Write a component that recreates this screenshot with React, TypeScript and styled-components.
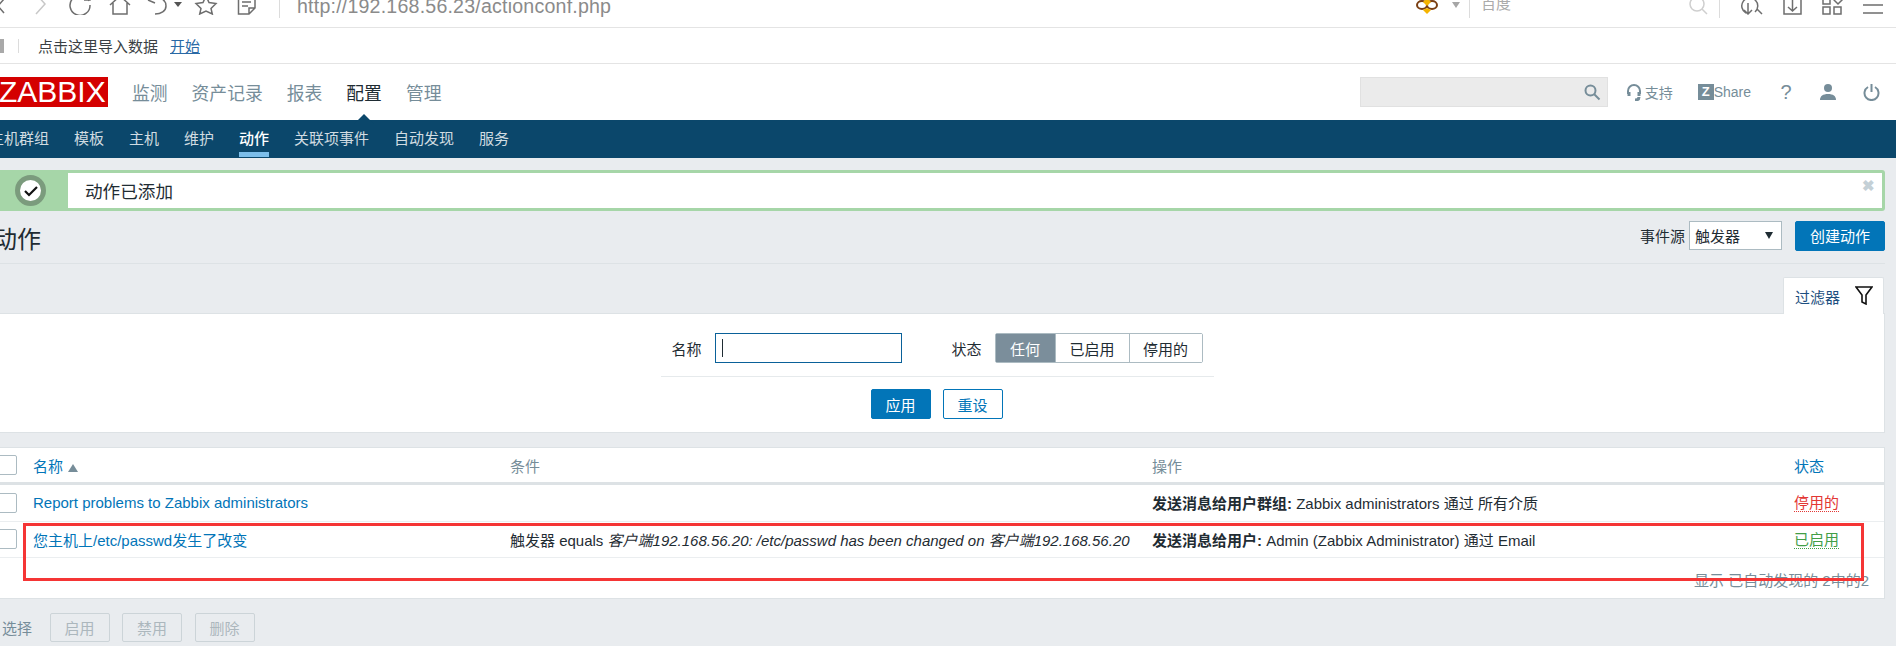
import styled, { createGlobalStyle } from "styled-components";

const GlobalStyle = createGlobalStyle`
  html, body {
    margin: 0;
    padding: 0;
    height: 646px;
    overflow: hidden;
    background: #e9ecef;
  }
  body {
    font-family: "Liberation Sans", "Noto Sans CJK SC", sans-serif;
    font-size: 15px;
    color: #1f2c33;
  }
  * { box-sizing: border-box; }
`;

const Page = styled.div`
  position: relative;
  width: 1896px;
  height: 646px;
  overflow: hidden;
`;

/* browser chrome */
const Toolbar = styled.div`
  height: 28px;
  background: #fff;
  border-bottom: 1px solid #e4e4e4;
  display: flex;
  align-items: flex-end;
  justify-content: space-between;
  padding-bottom: 12px;
  overflow: hidden;
`;

const ToolGroup = styled.div`
  display: flex;
  align-items: flex-end;
  height: 24px;
`;

const ToolIcon = styled.svg<{ $ml?: number; $w?: number; $tone?: string; $solid?: boolean }>`
  flex: none;
  width: ${p => p.$w ?? 24}px;
  height: 24px;
  margin-left: ${p => p.$ml ?? 0}px;
  fill: ${p => (p.$solid ? p.$tone : "none")};
  stroke: ${p => (p.$solid ? "none" : p.$tone ?? "#6e6e6e")};
  stroke-width: 1.5;
`;

const ToolDivider = styled.div<{ $ml: number }>`
  flex: none;
  width: 1px;
  height: 30px;
  margin-left: ${p => p.$ml}px;
  margin-bottom: -3px;
  background: #dcdcdc;
`;

const ToolSpacer = styled.div`
  flex: none;
  width: 11px;
`;

const UrlText = styled.span`
  flex: none;
  margin-left: 17px;
  font-size: 19.6px;
  line-height: 24px;
  margin-bottom: -3px;
  color: #8b8b8b;
  letter-spacing: 0.2px;
`;

const SearchHint = styled.span`
  flex: none;
  width: 32px;
  margin-left: 11px;
  font-size: 15px;
  line-height: 24px;
  margin-bottom: -1px;
  color: #ababab;
`;

const BookmarkBar = styled.div`
  height: 36px;
  background: #fff;
  border-bottom: 1px solid #e4e4e4;
  display: flex;
  align-items: center;
  font-size: 15px;
  color: #3a3f44;
`;

const BookmarkThumb = styled.div`
  width: 4px;
  height: 14px;
  background: #a9a9a9;
`;

const BookmarkDivider = styled.div`
  width: 1px;
  height: 14px;
  margin: 0 19px 0 14px;
  background: #dcdcdc;
`;

const BookmarkLink = styled.a`
  margin-left: 12px;
  color: #2a69a5;
  text-decoration: underline;
`;

/* zabbix header */
const Header = styled.header`
  position: relative;
  height: 56px;
  background: #fff;
  display: flex;
  align-items: center;
`;

const Logo = styled.div`
  flex: none;
  width: 108px;
  height: 30px;
  background: #d40000;
  color: #fff;
  font-size: 30px;
  line-height: 30px;
  text-indent: -1px;
  white-space: nowrap;
  overflow: hidden;
`;

const MainNav = styled.nav`
  display: flex;
  gap: 24px;
  margin-left: 24px;
  font-size: 17.8px;
`;

const MainNavItem = styled.a<{ $active?: boolean }>`
  position: relative;
  color: ${p => (p.$active ? "#1f2c33" : "#768d99")};
`;

const NavCaret = styled.span`
  position: absolute;
  left: 50%;
  bottom: -19px;
  margin-left: -10px;
  border-left: 10px solid transparent;
  border-right: 10px solid transparent;
  border-bottom: 10px solid #0b476b;
`;

const HeaderTools = styled.div`
  margin-left: auto;
  display: flex;
  align-items: center;
`;

const SearchBox = styled.div`
  width: 248px;
  height: 30px;
  background: #ebebeb;
  border: 1px solid #e1e1e1;
  display: flex;
  align-items: center;
  justify-content: flex-end;
  padding-right: 6px;
  color: #768d99;
`;

const HeaderLink = styled.span<{ $ml: number }>`
  display: flex;
  align-items: center;
  margin-left: ${p => p.$ml}px;
  color: #768d99;
  font-size: 14px;
`;

const LinkLabel = styled.span`
  margin-left: 3px;
`;

const ZBadge = styled.span`
  width: 16px;
  height: 16px;
  background: #768d99;
  color: #fff;
  font-size: 13px;
  font-weight: 700;
  line-height: 16px;
  text-align: center;
`;

const HelpMark = styled.span`
  width: 14px;
  margin-left: 28px;
  margin-right: 2px;
  font-size: 20px;
  color: #768d99;
  text-align: center;
`;

const SubNav = styled.nav`
  height: 38px;
  background: #0b476b;
  display: flex;
  gap: 25px;
  margin-bottom: 12px;
  overflow: hidden;
`;

const SubNavItem = styled.a<{ $active?: boolean; $first?: boolean }>`
  height: 37px;
  padding-top: 9px;
  margin-left: ${p => (p.$first ? "-11px" : "0")};
  font-size: 15px;
  line-height: 20px;
  color: ${p => (p.$active ? "#fff" : "rgba(255,255,255,.82)")};
  font-weight: ${p => (p.$active ? 500 : 400)};
  border-bottom: ${p => (p.$active ? "5px solid #7cbeea" : "none")};
`;

const Main = styled.main`
  width: 1894px;
  margin-left: -9px;
`;

const MessageBar = styled.div`
  height: 41px;
  background: #a6d6a8;
  border-radius: 0 3px 3px 0;
  padding: 3px 3px 3px 0;
  display: flex;
`;

const MessageIcon = styled.div`
  flex: none;
  width: 77px;
  display: flex;
  align-items: center;
  justify-content: center;
  padding-left: 1px;
`;

const MessageBody = styled.div`
  flex: 1;
  background: #fff;
  display: flex;
  align-items: center;
  justify-content: space-between;
  padding: 0 7px 0 17px;
  font-size: 17.6px;
`;

const CloseMark = styled.span`
  align-self: flex-start;
  margin-top: 4px;
  font-size: 15px;
  line-height: 18px;
  font-weight: 700;
  color: #c4d0d6;
`;

const TitleRow = styled.div`
  height: 53px;
  border-bottom: 1px solid #dde2e5;
  display: flex;
  align-items: center;
  justify-content: space-between;
  padding: 6px 0 0 2px;
`;

const PageTitle = styled.h1`
  margin: 0;
  font-size: 24px;
  font-weight: 400;
  line-height: 30px;
`;

const TitleControls = styled.div`
  display: flex;
  align-items: center;
  margin-top: -9px;
`;

const SelectBox = styled.div`
  width: 93px;
  height: 29px;
  margin: 0 13px 0 4px;
  background: #fff;
  border: 1px solid #acbbc2;
  display: flex;
  align-items: center;
  justify-content: space-between;
  padding: 0 8px 0 5px;
`;

const SelectArrow = styled.span`
  border-left: 4px solid transparent;
  border-right: 4px solid transparent;
  border-top: 7px solid #1f2c33;
`;

const Button = styled.button<{ $outline?: boolean }>`
  width: 60px;
  height: 30px;
  padding: 0;
  border-radius: 2px;
  border: 1px solid #0275b8;
  background: ${p => (p.$outline ? "#fff" : "#0275b8")};
  color: ${p => (p.$outline ? "#0275b8" : "#fff")};
  font: inherit;
`;

const CreateButton = styled(Button)`
  width: 90px;
`;

const TabRow = styled.div`
  display: flex;
  justify-content: flex-end;
  margin-top: 13px;
  padding-right: 1px;
  height: 36px;
`;

const FilterTab = styled.div`
  width: 101px;
  height: 37px;
  background: #fff;
  border: 1px solid #dde2e5;
  border-bottom: none;
  border-radius: 2px 2px 0 0;
  display: flex;
  justify-content: space-between;
  padding: 8px 10px 0 11px;
  color: #1d4f80;
  position: relative;
  z-index: 1;
`;

const FilterPanel = styled.section`
  height: 120px;
  background: #fff;
  border: 1px solid #dde2e5;
  border-left: none;
  padding-top: 19px;
`;

const FilterRow = styled.div`
  display: flex;
  justify-content: center;
  align-items: center;
  height: 30px;
  padding-right: 1px;
`;

const FieldLabel = styled.label<{ $ml?: number }>`
  margin-left: ${p => p.$ml ?? 0}px;
  margin-right: 13px;
`;

const NameInput = styled.div`
  width: 187px;
  height: 30px;
  border: 1px solid #0a6199;
  display: flex;
  align-items: center;
  padding-left: 6px;
`;

const Cursor = styled.span`
  width: 1px;
  height: 18px;
  background: #1f2c33;
`;

const Segments = styled.div`
  display: flex;
  height: 30px;
  border: 1px solid #acbbc2;
  border-radius: 2px;
`;

const Segment = styled.span<{ $width: number; $on?: boolean }>`
  width: ${p => p.$width}px;
  display: flex;
  align-items: center;
  justify-content: center;
  background: ${p => (p.$on ? "#7b8e9b" : "#fff")};
  color: ${p => (p.$on ? "#fff" : "#1f2c33")};
  & + & {
    border-left: 1px solid #acbbc2;
  }
`;

const FilterRule = styled.hr`
  width: 553px;
  height: 1px;
  margin: 13px auto 12px;
  border: 0;
  background: #e6eaec;
`;

const FilterButtons = styled.div`
  display: flex;
  justify-content: center;
  gap: 12px;
  padding-right: 2px;
`;

const ActionsCard = styled.section`
  height: 152px;
  margin-top: 14px;
  background: #fff;
  border: 1px solid #dde2e5;
  border-left: none;
`;

const TableRow = styled.div<{ $head?: boolean }>`
  display: grid;
  grid-template-columns: 42px 477px 642px 642px 1fr;
  align-items: center;
  height: ${p => (p.$head ? "37px" : "36.5px")};
  border-bottom: ${p => (p.$head ? "3px solid #dde2e5" : "1px solid #ebeef0")};
`;

const CheckBox = styled.span`
  width: 20px;
  height: 20px;
  margin-left: 6px;
  background: #fff;
  border: 1px solid #acbbc2;
  border-radius: 2px;
`;

const Link = styled.a`
  color: #0275b8;
`;

const SortArrow = styled.span`
  display: inline-block;
  margin-left: 5px;
  border-left: 5px solid transparent;
  border-right: 5px solid transparent;
  border-bottom: 8px solid #768d99;
`;

const HeadText = styled.span`
  color: #768d99;
`;

const Status = styled.span<{ $enabled?: boolean }>`
  justify-self: start;
  margin-top: 1px;
  line-height: 17px;
  color: ${p => (p.$enabled ? "#429e47" : "#e33734")};
  border-bottom: 1px dotted ${p => (p.$enabled ? "#429e47" : "#e33734")};
`;

const TableFooter = styled.div`
  text-align: right;
  padding: 11px 15px 0 0;
  color: #768d99;
`;

const BulkBar = styled.div`
  display: flex;
  align-items: center;
  gap: 12.5px;
  margin-top: 14px;
  padding-left: 11px;
  color: #768d99;
`;

const BulkButton = styled.button`
  width: 60px;
  height: 29px;
  border: 1px solid #ccd4d8;
  border-radius: 2px;
  background: #e9ecef;
  color: #acb7bd;
  font: inherit;
  padding: 0;
  &:first-of-type {
    margin-left: 5px;
  }
`;

const Annotation = styled.div`
  position: absolute;
  left: 23px;
  top: 523px;
  width: 1841px;
  height: 58px;
  border: 3px solid #f53535;
`;

const SUB_NAV = ["主机群组", "模板", "主机", "维护", "动作", "关联项事件", "自动发现", "服务"];

export default function App() {
  return (
    <Page>
      <GlobalStyle />
      <Toolbar>
        <ToolGroup>
          <ToolIcon $ml={-12} viewBox="0 0 24 24"><path d="M16 8l-6 7 6 7" /></ToolIcon>
          <ToolIcon $ml={16} $tone="#c8c8c8" viewBox="0 0 24 24"><path d="M8 3l9 10-9 10" /></ToolIcon>
          <ToolIcon $ml={16} viewBox="0 0 24 24"><path d="M21 10a10 10 0 1 0 1 4M16 9h6V3" /></ToolIcon>
          <ToolIcon $ml={16} viewBox="0 0 24 24"><path d="M2 14L12 5l10 9M5 12v11h14V12" /></ToolIcon>
          <ToolIcon $ml={13} viewBox="0 0 24 24"><path d="M3 9l7 3M5 6c9-1 16 2 16 9 0 5-5 8-11 8" /></ToolIcon>
          <ToolIcon $ml={3} $w={12} $solid $tone="#555" viewBox="0 0 12 24"><path d="M2 11h8l-4 5z" /></ToolIcon>
          <ToolIcon $ml={10} viewBox="0 0 24 24"><path d="M12 5l3 6.5 7 1-5 5 1.3 5.5-6.3-3-6.3 3L7 17.500l-5-5 7-1z" /></ToolIcon>
          <ToolIcon $ml={16} viewBox="0 0 24 24"><path d="M4.500 0v23H15l6-6V0M15 23v-6h6M8 11h9M8 15h6" /></ToolIcon>
          <ToolDivider $ml={21} />
          <UrlText>http://192.168.56.23/actionconf.php</UrlText>
        </ToolGroup>
        <ToolGroup>
          <ToolIcon $tone="#7a3f12" viewBox="0 0 24 24">
            <ellipse cx="7" cy="14" rx="5" ry="4" strokeWidth="2" />
            <ellipse cx="17" cy="14" rx="5" ry="4" strokeWidth="2" />
            <path d="M12 7l4 4-4 4-4-4zM12 17l4 2-4 4-4-4z" fill="#f5b400" stroke="none" />
          </ToolIcon>
          <ToolIcon $ml={11} $w={12} $solid $tone="#a6a6a6" viewBox="0 0 12 24"><path d="M2 11h8l-4 6z" /></ToolIcon>
          <ToolDivider $ml={7} />
          <SearchHint>百度</SearchHint>
          <ToolIcon $ml={172} $tone="#cfcfcf" viewBox="0 0 24 24"><circle cx="12" cy="13" r="7" /><path d="M17 18l5 5" /></ToolIcon>
          <ToolDivider $ml={10} />
          <ToolIcon $ml={20} viewBox="0 0 24 24"><path d="M6 22a8 8 0 1 1 9-1M17 18l5 5M8 12v11M4 19l4 4 4-4" /></ToolIcon>
          <ToolIcon $ml={16} viewBox="0 0 24 24"><path d="M4 0v23h17V0M12.500 8v12M8 16l4.500 4 4.500-4" /></ToolIcon>
          <ToolIcon $ml={16} viewBox="0 0 24 24"><path d="M3 6h7v7H3zM3 16h7v7H3zM14 16h7v7h-7zM14 6l4-1 4 4-4 4-4-4z" /></ToolIcon>
          <ToolIcon $ml={17} viewBox="0 0 24 24"><path d="M2 14h20M2 22h20" /></ToolIcon>
          <ToolSpacer />
        </ToolGroup>
      </Toolbar>

      <BookmarkBar>
        <BookmarkThumb />
        <BookmarkDivider />
        点击这里导入数据
        <BookmarkLink>开始</BookmarkLink>
      </BookmarkBar>

      <Header>
        <Logo>ZABBIX</Logo>
        <MainNav>
          <MainNavItem>监测</MainNavItem>
          <MainNavItem>资产记录</MainNavItem>
          <MainNavItem>报表</MainNavItem>
          <MainNavItem $active>配置<NavCaret /></MainNavItem>
          <MainNavItem>管理</MainNavItem>
        </MainNav>
        <HeaderTools>
          <SearchBox>
            <svg width="18" height="18" viewBox="0 0 18 18" fill="none" stroke="currentColor" strokeWidth="2">
              <circle cx="7.500" cy="7.500" r="5" />
              <path d="M11 11l5.500 5.500" />
            </svg>
          </SearchBox>
          <HeaderLink $ml={18}>
            <svg width="16" height="18" viewBox="0 0 16 18" fill="none" stroke="currentColor" strokeWidth="2">
              <path d="M2 11V8a6 6 0 0 1 12 0v3" />
              <path d="M3 9v4M13 9v4M13 14c0 2-2 3-4 3" strokeWidth="3" />
            </svg>
            <LinkLabel>支持</LinkLabel>
          </HeaderLink>
          <HeaderLink $ml={25}>
            <ZBadge>Z</ZBadge>
            Share
          </HeaderLink>
          <HelpMark>?</HelpMark>
          <HeaderLink $ml={24}>
            <svg width="18" height="18" viewBox="0 0 18 18" fill="currentColor">
              <circle cx="9" cy="5" r="4" />
              <path d="M1 17c0-4 3-6 8-6s8 2 8 6z" />
            </svg>
          </HeaderLink>
          <HeaderLink $ml={26}>
            <svg width="17" height="18" viewBox="0 0 17 18" fill="none" stroke="currentColor" strokeWidth="2">
              <path d="M5 4a7 7 0 1 0 7 0M8.500 1v8" />
            </svg>
          </HeaderLink>
          <HeaderLink $ml={16} />
        </HeaderTools>
      </Header>

      <SubNav>
        {SUB_NAV.map((name, i) => (
          <SubNavItem key={name} $first={i === 0} $active={name === "动作"}>{name}</SubNavItem>
        ))}
      </SubNav>

      <Main>
        <MessageBar>
          <MessageIcon>
            <svg width="31" height="31" viewBox="0 0 31 31">
              <circle cx="15.500" cy="15.500" r="13" fill="#fff" stroke="#7b9b7d" strokeWidth="5" />
              <path d="M10 16l4 4 8-8" fill="none" stroke="#111" strokeWidth="2.200" />
            </svg>
          </MessageIcon>
          <MessageBody>
            动作已添加
            <CloseMark>✖</CloseMark>
          </MessageBody>
        </MessageBar>

        <TitleRow>
          <PageTitle>动作</PageTitle>
          <TitleControls>
            <span>事件源</span>
            <SelectBox>触发器<SelectArrow /></SelectBox>
            <CreateButton>创建动作</CreateButton>
          </TitleControls>
        </TitleRow>

        <TabRow>
          <FilterTab>
            过滤器
            <svg width="18" height="19" viewBox="0 0 18 19" fill="none" stroke="#111" strokeWidth="1.600">
              <path d="M1 1h16l-6 8v9l-4-2V9z" />
            </svg>
          </FilterTab>
        </TabRow>

        <FilterPanel>
          <FilterRow>
            <FieldLabel>名称</FieldLabel>
            <NameInput><Cursor /></NameInput>
            <FieldLabel $ml={50}>状态</FieldLabel>
            <Segments>
              <Segment $width={59} $on>任何</Segment>
              <Segment $width={74}>已启用</Segment>
              <Segment $width={73}>停用的</Segment>
            </Segments>
          </FilterRow>
          <FilterRule />
          <FilterButtons>
            <Button>应用</Button>
            <Button $outline>重设</Button>
          </FilterButtons>
        </FilterPanel>

        <ActionsCard>
          <TableRow $head>
            <CheckBox />
            <span><Link>名称</Link><SortArrow /></span>
            <HeadText>条件</HeadText>
            <HeadText>操作</HeadText>
            <Link>状态</Link>
          </TableRow>
          <TableRow>
            <CheckBox />
            <Link>Report problems to Zabbix administrators</Link>
            <span />
            <span><b>发送消息给用户群组:</b> Zabbix administrators 通过 所有介质</span>
            <Status>停用的</Status>
          </TableRow>
          <TableRow>
            <CheckBox />
            <Link>您主机上/etc/passwd发生了改变</Link>
            <span>触发器 equals <i>客户端192.168.56.20: /etc/passwd has been changed on 客户端192.168.56.20</i></span>
            <span><b>发送消息给用户:</b> Admin (Zabbix Administrator) 通过 Email</span>
            <Status $enabled>已启用</Status>
          </TableRow>
          <TableFooter>显示 已自动发现的 2中的2</TableFooter>
        </ActionsCard>

        <BulkBar>
          选择
          <BulkButton>启用</BulkButton>
          <BulkButton>禁用</BulkButton>
          <BulkButton>删除</BulkButton>
        </BulkBar>
      </Main>

      <Annotation />
    </Page>
  );
}
